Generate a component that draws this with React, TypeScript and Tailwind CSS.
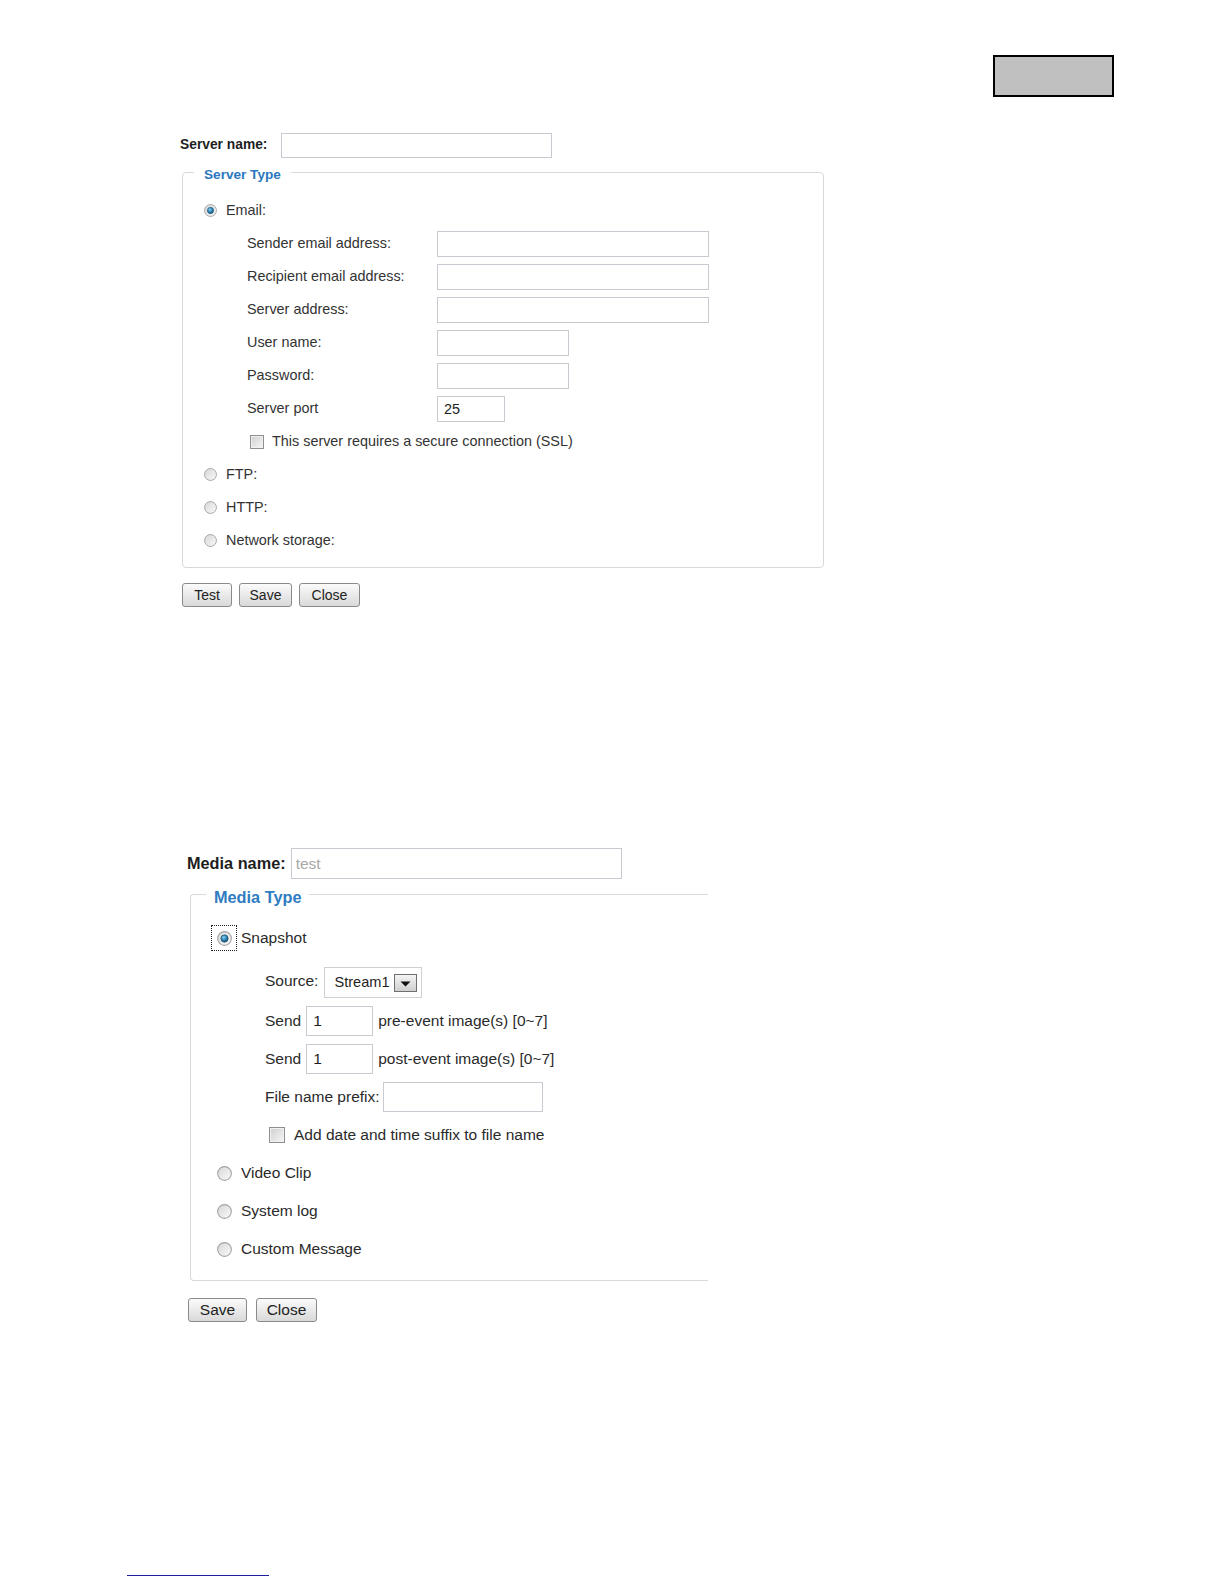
import React from 'react';

interface RadioProps {
  checked?: boolean;
  size: number;
}

const Radio: React.FC<RadioProps> = ({ checked, size }) => (
  <svg width={size} height={size} viewBox="0 0 14 14" className="block shrink-0">
    <defs>
      <linearGradient id="radioFace" x1="0" y1="0" x2="1" y2="1">
        <stop offset="0" stopColor="#d6d6d6" />
        <stop offset="1" stopColor="#fbfbfb" />
      </linearGradient>
      <radialGradient id="radioDot" cx="0.4" cy="0.35" r="0.7">
        <stop offset="0" stopColor="#8fd0f0" />
        <stop offset="0.5" stopColor="#2f88b8" />
        <stop offset="1" stopColor="#164e70" />
      </radialGradient>
    </defs>
    <circle cx="7" cy="7" r="6.4" fill="url(#radioFace)" stroke="#a2a2a2" strokeWidth="1" />
    {checked && <circle cx="7" cy="7" r="3.4" fill="url(#radioDot)" stroke="#1d4f6c" strokeWidth="0.6" />}
  </svg>
);

const Checkbox: React.FC<{ size: string }> = ({ size }) => (
  <span className={`${size} block shrink-0 border border-[#8f8f8f] bg-linear-to-br from-[#cfcfcf] to-[#f6f6f6] shadow-[inset_0_0_0_1px_#f0f0f0]`} />
);

const emailFields = [
  { label: 'Sender email address:', width: 'w-[272px]', value: '' },
  { label: 'Recipient email address:', width: 'w-[272px]', value: '' },
  { label: 'Server address:', width: 'w-[272px]', value: '' },
  { label: 'User name:', width: 'w-[132px]', value: '' },
  { label: 'Password:', width: 'w-[132px]', value: '' },
  { label: 'Server port', width: 'w-[68px]', value: '25' },
];

const otherServers = ['FTP:', 'HTTP:', 'Network storage:'];
const otherMedia = ['Video Clip', 'System log', 'Custom Message'];

const btn1 =
  'h-[24px] rounded-[3px] border border-[#8a8a8a] bg-linear-to-b from-[#fbfbfb] to-[#d9d9d9] text-[14px] text-[#222] leading-none';
const btn2 =
  'h-[24px] rounded-[3px] border border-[#8a8a8a] bg-linear-to-b from-[#fbfbfb] to-[#d9d9d9] text-[15.5px] text-[#222] leading-none';

export default function App() {
  return (
    <div className="w-[1224px] h-[1584px] bg-white flex flex-col pt-[55px] pb-[8px] font-['Liberation_Sans',Arial,sans-serif] text-[#333]">
      <div className="ml-[993px] w-[121px] h-[42px] border-2 border-black bg-[#c0c0c0]" />

      {/* Event server settings */}
      <div className="ml-[180px] mt-[36px] flex flex-col items-start text-[14.4px]">
        <div className="flex items-center h-[25px]">
          <span className="font-bold text-[13.8px] text-[#1e1e1e]">Server name:</span>
          <input
            readOnly
            className="ml-[14px] w-[271px] h-[25px] border border-[#c9c9d1] outline-none bg-white"
          />
        </div>

        <fieldset className="mt-[2px] ml-[2px] w-[642px] border border-[#d9d9d9] rounded-[4px] pb-[10px]">
          <legend className="ml-[11px] px-[10px] pt-[6px] leading-[18px] font-bold text-[13.6px] text-[#2b78be]">
            Server Type
          </legend>
          <div className="pt-[10px] flex flex-col">
            <div className="h-[33px] flex items-center pl-[21px]">
              <Radio checked size={13} />
              <span className="ml-[9px]">Email:</span>
            </div>
            {emailFields.map((f) => (
              <div key={f.label} className="h-[33px] flex items-center pl-[64px]">
                <span className="w-[190px] shrink-0">{f.label}</span>
                <input
                  readOnly
                  defaultValue={f.value}
                  className={`${f.width} h-[26px] border border-[#c9c9d1] outline-none bg-white px-[6px] text-[14.4px] text-[#222]`}
                />
              </div>
            ))}
            <div className="h-[33px] flex items-center pl-[67px]">
              <Checkbox size="w-[14px] h-[14px]" />
              <span className="ml-[8px]">This server requires a secure connection (SSL)</span>
            </div>
            {otherServers.map((s) => (
              <div key={s} className="h-[33px] flex items-center pl-[21px]">
                <Radio size={13} />
                <span className="ml-[9px]">{s}</span>
              </div>
            ))}
          </div>
        </fieldset>

        <div className="mt-[15px] ml-[2px] flex gap-[7px]">
          <button className={`${btn1} w-[50px]`}>Test</button>
          <button className={`${btn1} w-[53px]`}>Save</button>
          <button className={`${btn1} w-[61px]`}>Close</button>
        </div>
      </div>

      {/* Media settings */}
      <div className="ml-[187px] mt-[241px] flex flex-col items-start text-[15.5px] text-[#2a2a2a]">
        <div className="flex items-center h-[31px]">
          <span className="font-bold text-[16.3px] text-[#1e1e1e]">Media name:</span>
          <input
            readOnly
            defaultValue="test"
            className="ml-[5px] w-[331px] h-[31px] border border-[#c9c9d1] outline-none bg-white px-[4px] text-[15.5px] text-[#a8a8a8]"
          />
        </div>

        <fieldset className="mt-[2px] ml-[3px] w-[518px] border border-r-0 border-[#d9d9d9] rounded-l-[4px] pb-[12px]">
          <legend className="ml-[15px] px-[8px] pt-[6px] leading-[20px] font-bold text-[16.3px] text-[#2f7cc2]">
            Media Type
          </legend>
          <div className="pt-[9px] flex flex-col">
            <div className="h-[44px] flex items-center pl-[20px]">
              <span className="w-[26px] h-[26px] flex items-center justify-center border border-dotted border-[#222]">
                <Radio checked size={15} />
              </span>
              <span className="ml-[4px]">Snapshot</span>
            </div>

            <div className="h-[42px] flex items-center pl-[74px]">
              <span>Source:</span>
              <div className="ml-[6px] w-[98px] h-[31px] border border-[#cfcfd4] flex items-center pl-[9px] pr-[4px] mt-[3px]">
                <span className="text-[14.6px] text-[#1e1e1e]">Stream1</span>
                <span className="ml-auto w-[23px] h-[18px] border border-[#6f6f6f] bg-linear-to-b from-[#f4f4f4] to-[#cfcfcf] flex items-center justify-center">
                  <svg width="13" height="10" viewBox="0 0 13 10">
                    <polygon points="1.5,3.5 11.5,3.5 6.5,8.5" fill="#111" />
                  </svg>
                </span>
              </div>
            </div>

            {['pre-event image(s) [0~7]', 'post-event image(s) [0~7]'].map((t) => (
              <div key={t} className="h-[38px] flex items-center pl-[74px]">
                <span>Send</span>
                <input
                  readOnly
                  defaultValue="1"
                  className="ml-[5px] w-[67px] h-[30px] border border-[#c9c9d1] outline-none bg-white px-[6px] text-[15.5px] text-[#1e1e1e]"
                />
                <span className="ml-[5px]">{t}</span>
              </div>
            ))}

            <div className="h-[38px] flex items-center pl-[74px]">
              <span>File name prefix:</span>
              <input
                readOnly
                className="ml-[3px] w-[160px] h-[30px] border border-[#c9c9d1] outline-none bg-white"
              />
            </div>

            <div className="h-[38px] flex items-center pl-[78px]">
              <Checkbox size="w-[16px] h-[16px]" />
              <span className="ml-[9px]">Add date and time suffix to file name</span>
            </div>

            {otherMedia.map((m) => (
              <div key={m} className="h-[38px] flex items-center pl-[20px]">
                <span className="w-[26px] h-[26px] flex items-center justify-center">
                  <Radio size={15} />
                </span>
                <span className="ml-[4px]">{m}</span>
              </div>
            ))}
          </div>
        </fieldset>

        <div className="mt-[17px] ml-[1px] flex gap-[9px]">
          <button className={`${btn2} w-[59px]`}>Save</button>
          <button className={`${btn2} w-[61px]`}>Close</button>
        </div>
      </div>

      <div className="mt-auto ml-[127px] w-[142px] h-[1px] bg-[#1f1f9e]" />
    </div>
  );
}
